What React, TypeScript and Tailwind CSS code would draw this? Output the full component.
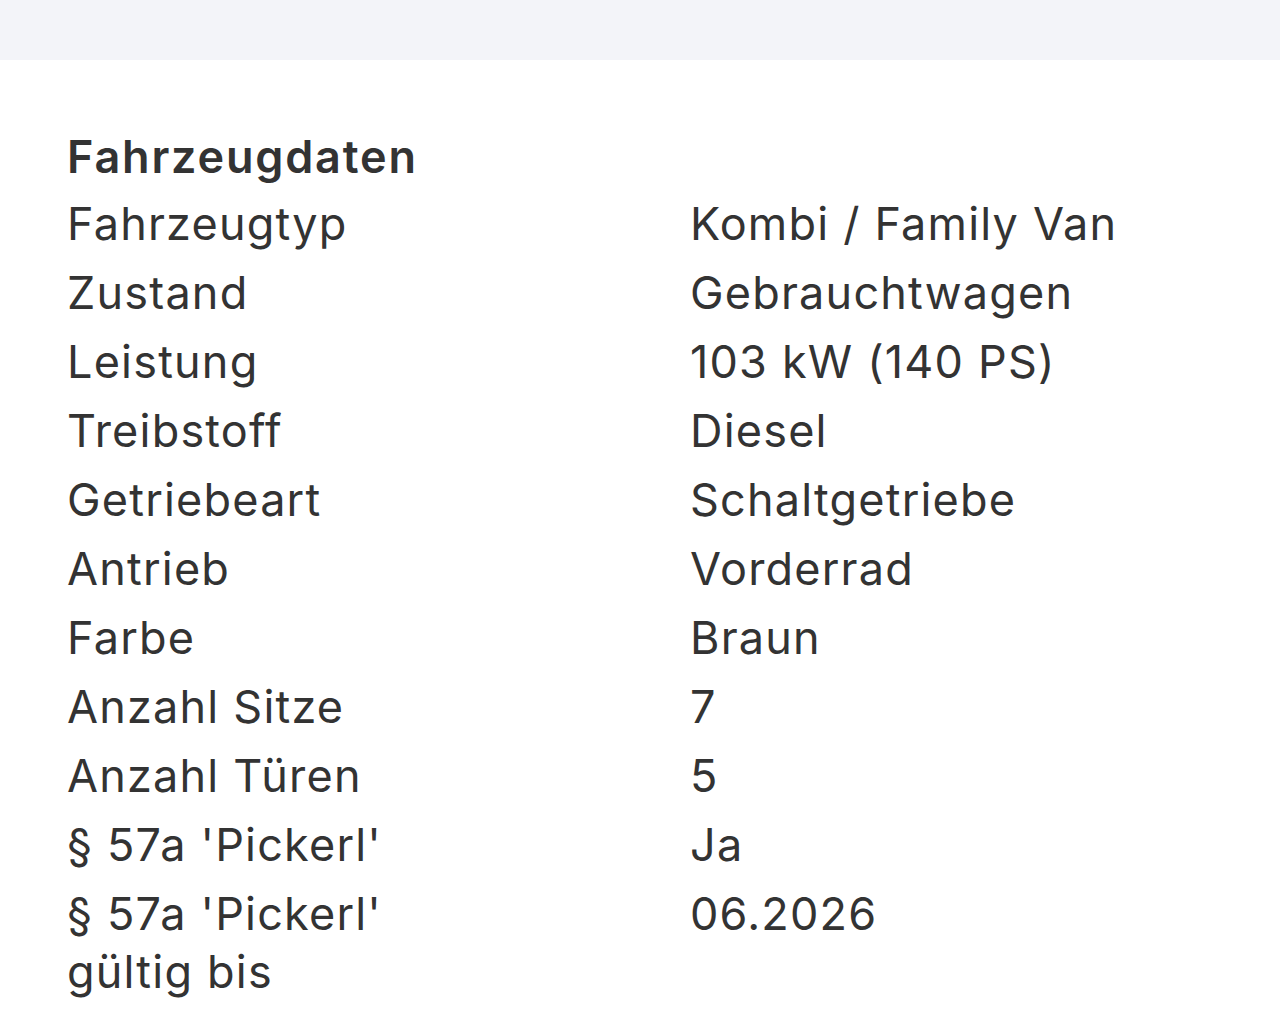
const rows: [string, string][] = [
  ['Fahrzeugtyp', 'Kombi / Family Van'],
  ['Zustand', 'Gebrauchtwagen'],
  ['Leistung', '103 kW (140 PS)'],
  ['Treibstoff', 'Diesel'],
  ['Getriebeart', 'Schaltgetriebe'],
  ['Antrieb', 'Vorderrad'],
  ['Farbe', 'Braun'],
  ['Anzahl Sitze', '7'],
  ['Anzahl Türen', '5'],
  ["§ 57a 'Pickerl'", 'Ja'],
  ["§ 57a 'Pickerl' gültig bis", '06.2026'],
]

export default function App() {
  return (
    <div
      className="min-h-screen bg-white text-[#333333]"
      style={{ fontFamily: 'Inter, "Noto Sans", sans-serif' }}
    >
      {/* top bar */}
      <div className="h-[60px] bg-[#f3f4f9]" />

      <section className="px-[67px] pt-[67px]">
        <h2 className="text-[45px] font-semibold leading-[59px] tracking-[0.04em] pb-[3px]">
          Fahrzeugdaten
        </h2>
        <dl className="grid grid-cols-[623px_1fr] tracking-[0.075em]">
          {rows.map(([label, value]) => (
            <div key={label} className="contents">
              <dt className="max-w-[400px] py-[5.5px] text-[45px] leading-[58px]">{label}</dt>
              <dd className="py-[5.5px] text-[45px] leading-[58px]">{value}</dd>
            </div>
          ))}
        </dl>
      </section>
    </div>
  )
}
